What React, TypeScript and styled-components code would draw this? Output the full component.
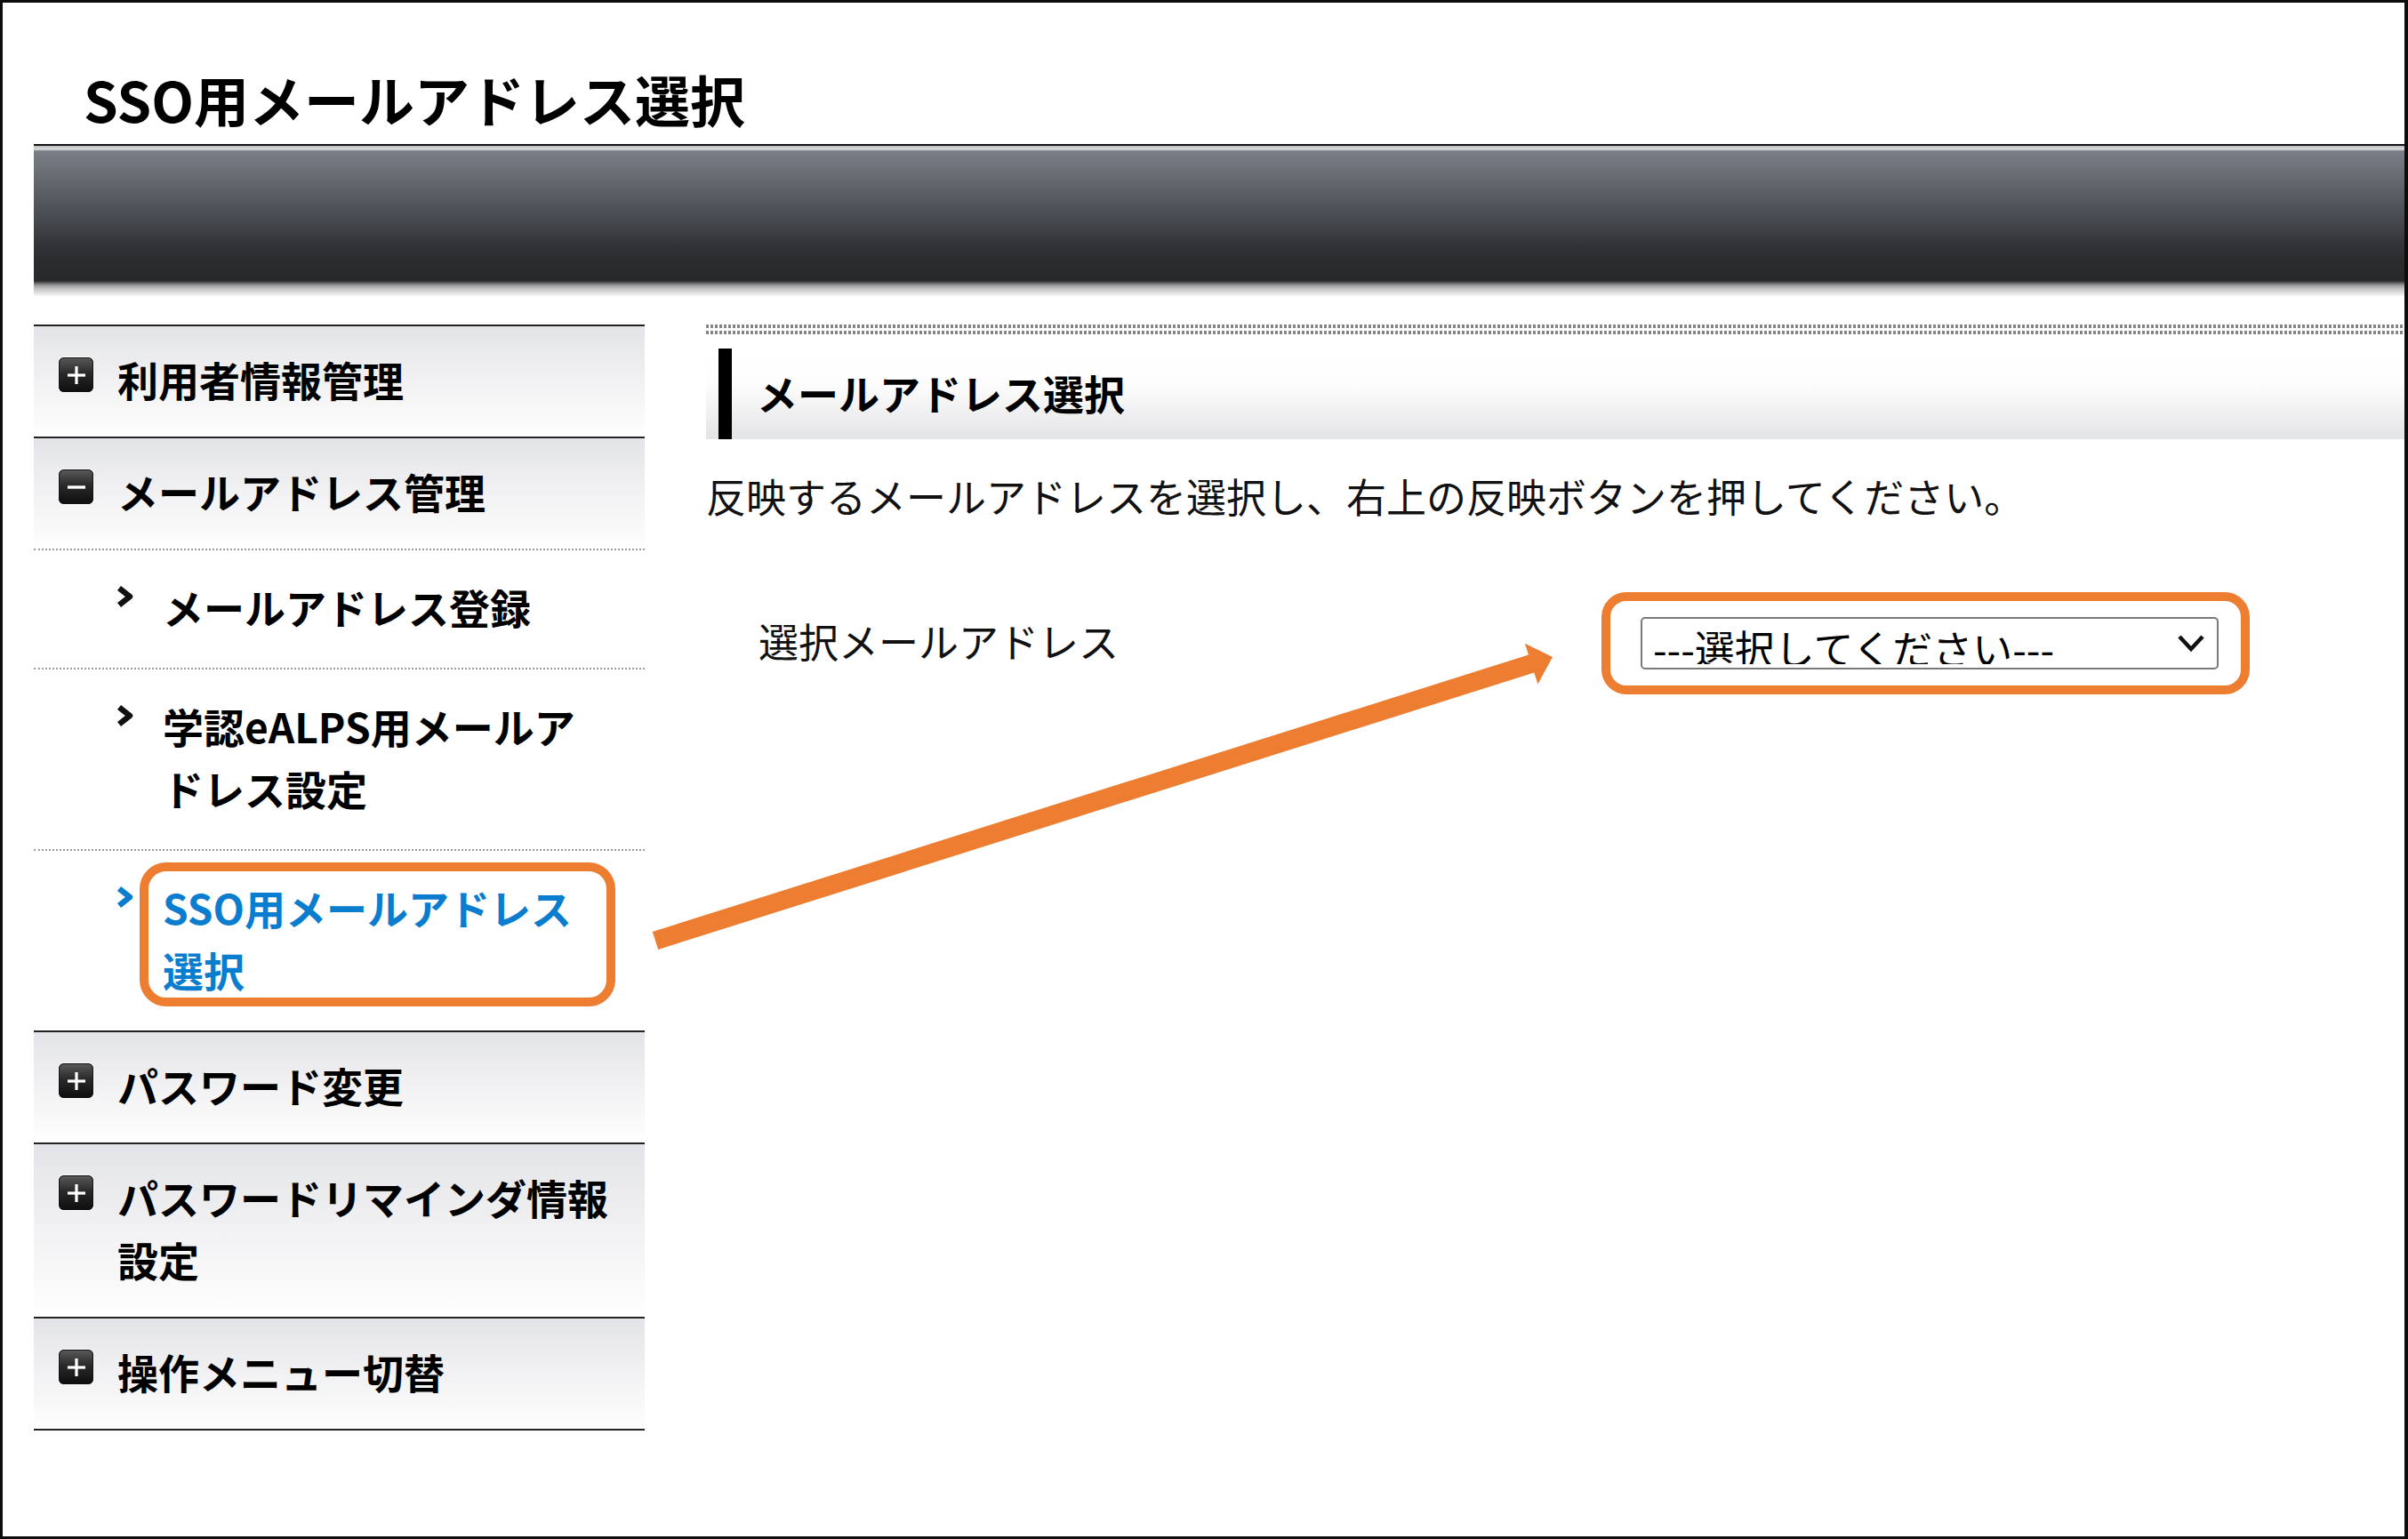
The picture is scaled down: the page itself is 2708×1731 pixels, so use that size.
import React from "react";
import styled, { createGlobalStyle } from "styled-components";

const FONT = `"Noto Sans CJK JP", "Noto Sans", "Liberation Sans", sans-serif`;

const Global = createGlobalStyle`
  html, body { margin: 0; padding: 0; background: #fff; }
  body { font-family: ${FONT}; color: #000; }
  * { box-sizing: border-box; }
`;

const Frame = styled.div`
  position: relative;
  width: 2708px;
  height: 1731px;
  border: 3px solid #0d0d0d;
  border-right-width: 4px;
  background: #fff;
  overflow: hidden;
  padding-left: 35px;
`;

const Title = styled.h1`
  margin: 0 0 9px;
  padding: 68px 0 2px 56px;
  font-family: ${FONT};
  font-weight: 700;
  font-size: 62px;
  line-height: 80px;
  color: #000;
`;

const HeaderBar = styled.div`
  height: 172px;
  border-top: 2px solid #151515;
  background: linear-gradient(
    to bottom,
    #b9bbbe 0px,
    #dadbdd 4px,
    #7a7e86 6px,
    #6a6e75 30px,
    #4c4f55 75px,
    #333538 110px,
    #2a2b2d 130px,
    #27282a 152px,
    #5c5c5c 154px,
    #9c9c9c 157px,
    #c4c4c4 161px,
    #dedede 165px,
    #fff 170px
  );
`;

const Body = styled.div`
  display: flex;
  align-items: flex-start;
  margin-top: 31px;
`;

const Sidebar = styled.nav`
  width: 687px;
  flex-shrink: 0;
  border-bottom: 2px solid #222;
`;

const MenuHeader = styled.div`
  display: flex;
  align-items: flex-start;
  padding: 24px 20px 30px 28px;
  border-top: 2px solid #222;
  background: linear-gradient(to bottom, #e3e4e7 0%, #f3f3f5 55%, #fbfbfb 88%, #fff 100%);
  font-weight: 700;
  font-size: 46px;
  line-height: 70px;
  color: #000;
`;

const ToggleIcon = styled.span`
  flex-shrink: 0;
  width: 39px;
  height: 39px;
  margin-top: 11px;
  margin-right: 27px;
  border-radius: 6px;
  background: linear-gradient(to bottom, #5a5a5a 0%, #2a2a2a 45%, #0d0d0d 100%);
  box-shadow: inset 0 0 0 1px #111, 0 0 0 1px #fff;
  display: flex;
  align-items: center;
  justify-content: center;
`;

const SubItem = styled.div<{ $active?: boolean }>`
  display: flex;
  align-items: flex-start;
  padding: 28px 35px 34px 92px;
  border-top: 2px dotted #9c9c9c;
  background: #fff;
  font-weight: 700;
  font-size: 46px;
  line-height: 70px;
  color: ${(p) => (p.$active ? "#0b7dcf" : "#000")};
`;

const Chevron = styled.svg`
  flex-shrink: 0;
  width: 22px;
  height: 26px;
  margin-top: 11px;
  margin-right: 31px;
`;

const ItemText = styled.span`
  display: block;
  flex: 1;
`;

const Highlighted = styled.span`
  position: relative;
  display: block;
  flex: 1;
  &::after {
    content: "";
    position: absolute;
    left: -26px;
    right: -2px;
    top: -15px;
    bottom: -7px;
    border: 10px solid #ed7d31;
    border-radius: 30px;
    pointer-events: none;
  }
`;

const Main = styled.main`
  flex: 1;
  margin-left: 69px;
`;

const DottedRule = styled.div`
  height: 11px;
  background:
    linear-gradient(to bottom, transparent 4px, #fff 4px, #fff 7px, transparent 7px),
    repeating-linear-gradient(90deg, #858585 0 3px, #fff 3px 5px);
`;

const SectionHead = styled.div`
  margin-top: 14px;
  height: 104px;
  padding: 2px 0 0 14px;
  background: linear-gradient(to bottom, #fff 0%, #fdfdfd 40%, #ececee 80%, #e3e4e6 100%);
`;

const SectionTitle = styled.h2`
  margin: 0;
  height: 102px;
  border-left: 15px solid #000;
  padding: 0 0 4px 28px;
  display: flex;
  align-items: center;
  font-weight: 700;
  font-size: 46px;
  line-height: 70px;
  color: #000;
`;

const Description = styled.p`
  margin: 29px 0 0 0;
  font-weight: 400;
  font-size: 45px;
  line-height: 70px;
  color: #111;
`;

const FormRow = styled.div`
  display: flex;
  align-items: center;
  margin-top: 73px;
`;

const FieldLabel = styled.label`
  width: 1007px;
  padding-left: 59px;
  padding-bottom: 6px;
  font-weight: 400;
  font-size: 45px;
  line-height: 70px;
  color: #111;
`;

const Callout = styled.div`
  border: 10px solid #ed7d31;
  border-radius: 28px;
  padding: 18px 25px 18px 34px;
`;

const SelectWrap = styled.div`
  position: relative;
  width: 650px;
  height: 59px;
`;

const Select = styled.select`
  appearance: none;
  -webkit-appearance: none;
  width: 100%;
  height: 100%;
  margin: 0;
  border: 2px solid #7a7a7a;
  border-radius: 5px;
  background: #fff;
  padding: 0 0 4px 12px;
  font-family: ${FONT};
  font-weight: 400;
  font-size: 45px;
  color: #000;
  outline: none;
`;

const SelectArrow = styled.svg`
  position: absolute;
  right: 15px;
  top: 19px;
  width: 32px;
  height: 21px;
  pointer-events: none;
`;

const Overlay = styled.svg`
  position: absolute;
  left: -3px;
  top: -3px;
  width: 2708px;
  height: 1731px;
  pointer-events: none;
`;

const PlusIcon = () => (
  <svg width="24" height="24" viewBox="0 0 24 24">
    <rect x="10.4" y="2" width="3.2" height="20" fill="#fff" />
    <rect x="2" y="10.4" width="20" height="3.2" fill="#fff" />
  </svg>
);

const MinusIcon = () => (
  <svg width="24" height="24" viewBox="0 0 24 24">
    <rect x="2" y="10.3" width="20" height="3.4" fill="#fff" />
  </svg>
);

const ChevronRight = ({ color }: { color: string }) => (
  <Chevron viewBox="0 0 22 26">
    <polyline points="4,3.5 16,13 4,22.5" fill="none" stroke={color} strokeWidth="6.5" strokeLinejoin="round" />
  </Chevron>
);

type HeaderProps = { open?: boolean; children: React.ReactNode };
const Header = ({ open, children }: HeaderProps) => (
  <MenuHeader>
    <ToggleIcon>{open ? <MinusIcon /> : <PlusIcon />}</ToggleIcon>
    <ItemText>{children}</ItemText>
  </MenuHeader>
);

// Annotation arrow geometry (page coordinates)
const tail = { x: 737, y: 1058 };
const tip = { x: 1746, y: 739 };
const dx = tip.x - tail.x;
const dy = tip.y - tail.y;
const len = Math.hypot(dx, dy);
const ux = dx / len;
const uy = dy / len;
const nx = -uy;
const ny = ux;
const headLen = 25;
const headHalf = 24;
const shaftHalf = 10.5;
const bx = tip.x - ux * headLen;
const by = tip.y - uy * headLen;
const pts = [
  [tail.x - nx * shaftHalf, tail.y - ny * shaftHalf],
  [bx - nx * shaftHalf, by - ny * shaftHalf],
  [bx - nx * headHalf, by - ny * headHalf],
  [tip.x, tip.y],
  [bx + nx * headHalf, by + ny * headHalf],
  [bx + nx * shaftHalf, by + ny * shaftHalf],
  [tail.x + nx * shaftHalf, tail.y + ny * shaftHalf],
]
  .map(([x, y]) => `${x.toFixed(1)},${y.toFixed(1)}`)
  .join(" ");

export default function App() {
  return (
    <>
      <Global />
      <Frame>
        <Title>SSO用メールアドレス選択</Title>
        <HeaderBar />
        <Body>
          <Sidebar>
            <Header>利用者情報管理</Header>
            <Header open>メールアドレス管理</Header>
            <SubItem>
              <ChevronRight color="#111" />
              <ItemText>メールアドレス登録</ItemText>
            </SubItem>
            <SubItem>
              <ChevronRight color="#111" />
              <ItemText>
                学認eALPS用メールア
                <br />
                ドレス設定
              </ItemText>
            </SubItem>
            <SubItem $active>
              <ChevronRight color="#0b7dcf" />
              <Highlighted>
                SSO用メールアドレス
                <br />
                選択
              </Highlighted>
            </SubItem>
            <Header>パスワード変更</Header>
            <Header>パスワードリマインダ情報設定</Header>
            <Header>操作メニュー切替</Header>
          </Sidebar>
          <Main>
            <DottedRule />
            <SectionHead>
              <SectionTitle>メールアドレス選択</SectionTitle>
            </SectionHead>
            <Description>反映するメールアドレスを選択し、右上の反映ボタンを押してください。</Description>
            <FormRow>
              <FieldLabel htmlFor="sso-mail">選択メールアドレス</FieldLabel>
              <Callout>
                <SelectWrap>
                  <Select id="sso-mail" defaultValue="">
                    <option value="">---選択してください---</option>
                  </Select>
                  <SelectArrow viewBox="0 0 32 21">
                    <polyline points="3,3 16,17 29,3" fill="none" stroke="#111" strokeWidth="4.5" />
                  </SelectArrow>
                </SelectWrap>
              </Callout>
            </FormRow>
          </Main>
        </Body>
        <Overlay viewBox="0 0 2708 1731">
          <polygon points={pts} fill="#ed7d31" />
        </Overlay>
      </Frame>
    </>
  );
}
